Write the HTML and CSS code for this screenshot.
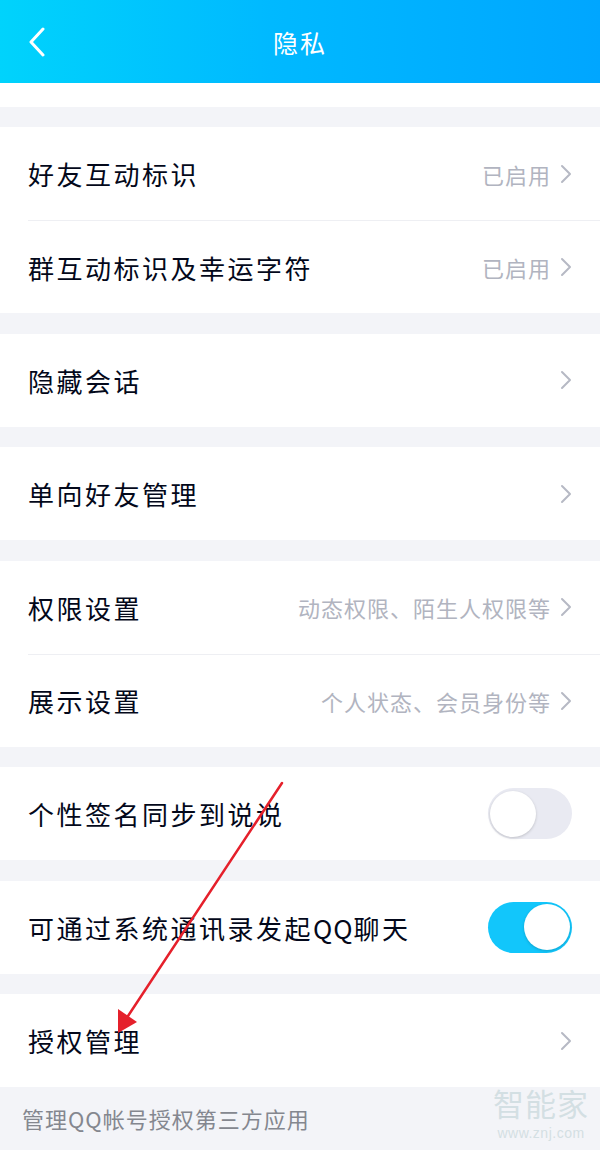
FILE: index.html
```html
<!DOCTYPE html>
<html lang="zh-CN">

<head>
    <meta charset="UTF-8">
    <meta name="viewport" content="width=device-width, initial-scale=1.0">
    <title>隐私</title>
    <link rel="stylesheet" href="styles.css">
</head>

<body>
    <div class="page">
        <header class="titlebar">
            <svg class="back" width="18" height="30" viewBox="0 0 18 30">
                <path d="M15 2 L3 15 L15 28" fill="none" stroke="#fff" stroke-width="3" stroke-linecap="round" stroke-linejoin="round" />
            </svg>
            <h1>隐私</h1>
        </header>

        <div class="spacer"></div>

        <div class="groups">
            <div class="group">
                <div class="row">
                    <span class="label">好友互动标识</span>
                    <span class="value">已启用</span>
                    <svg class="chevron" viewBox="0 0 12 20"><path d="M2 2 L10 10 L2 18" /></svg>
                </div>
                <div class="row">
                    <span class="label">群互动标识及幸运字符</span>
                    <span class="value">已启用</span>
                    <svg class="chevron" viewBox="0 0 12 20"><path d="M2 2 L10 10 L2 18" /></svg>
                </div>
            </div>

            <div class="group">
                <div class="row">
                    <span class="label">隐藏会话</span>
                    <svg class="chevron" viewBox="0 0 12 20"><path d="M2 2 L10 10 L2 18" /></svg>
                </div>
            </div>

            <div class="group">
                <div class="row">
                    <span class="label">单向好友管理</span>
                    <svg class="chevron" viewBox="0 0 12 20"><path d="M2 2 L10 10 L2 18" /></svg>
                </div>
            </div>

            <div class="group">
                <div class="row">
                    <span class="label">权限设置</span>
                    <span class="value">动态权限、陌生人权限等</span>
                    <svg class="chevron" viewBox="0 0 12 20"><path d="M2 2 L10 10 L2 18" /></svg>
                </div>
                <div class="row">
                    <span class="label">展示设置</span>
                    <span class="value">个人状态、会员身份等</span>
                    <svg class="chevron" viewBox="0 0 12 20"><path d="M2 2 L10 10 L2 18" /></svg>
                </div>
            </div>

            <div class="group">
                <div class="row">
                    <span class="label">个性签名同步到说说</span>
                    <span class="switch"><span class="knob"></span></span>
                </div>
            </div>

            <div class="group">
                <div class="row">
                    <span class="label">可通过系统通讯录发起<span class="latin">QQ</span>聊天</span>
                    <span class="switch on"><span class="knob"></span></span>
                </div>
            </div>

            <div class="group">
                <div class="row">
                    <span class="label">授权管理</span>
                    <svg class="chevron" viewBox="0 0 12 20"><path d="M2 2 L10 10 L2 18" /></svg>
                </div>
            </div>
        </div>

        <p class="hint">管理QQ帐号授权第三方应用</p>

        <div class="watermark">
            <span class="wm-name">智能家</span>
            <span class="wm-url">www.znj.com</span>
        </div>

        <svg class="arrow" width="600" height="1150" viewBox="0 0 600 1150">
            <line x1="282" y1="783" x2="128" y2="1016" stroke="#e5202b" stroke-width="2.5" stroke-linecap="round" />
            <polygon points="118,1033 118,1009 137,1022" fill="#e5202b" />
        </svg>
    </div>
</body>

</html>
```

FILE: styles.css
```css
body {
    margin: 0;
    background: #f3f4f8;
    font-family: "Noto Sans CJK SC", "Noto Sans", sans-serif;
    color: #03081a;
}

.page {
    position: relative;
    width: 600px;
    height: 1150px;
    overflow: hidden;
}

.titlebar {
    height: 83px;
    display: flex;
    align-items: center;
    justify-content: center;
    position: relative;
    background: linear-gradient(90deg, #00d3fc 0%, #00b9ff 45%, #00a6ff 100%);
}

.titlebar h1 {
    margin: 0;
    font-size: 25px;
    font-weight: normal;
    letter-spacing: 2px;
    color: #fff;
}

.back {
    position: absolute;
    left: 28px;
    top: 27px;
}

.spacer {
    height: 24px;
    background: #fff;
}

.groups {
    display: flex;
    flex-direction: column;
    gap: 20.5px;
    padding-top: 20px;
}

.group {
    background: #fff;
    padding-left: 28px;
}

.row {
    height: 93px;
    display: flex;
    align-items: center;
    padding-right: 28px;
    box-sizing: border-box;
}

.row + .row {
    border-top: 1px solid #eeeff3;
}

.label {
    flex: 1;
    font-size: 26px;
    letter-spacing: 2.5px;
}

.latin {
    letter-spacing: 1px;
}

.value {
    font-size: 22px;
    letter-spacing: 1px;
    color: #b1b4c0;
    margin-right: 9px;
}

.chevron {
    width: 12px;
    height: 20px;
    fill: none;
    stroke: #b6b9c4;
    stroke-width: 2;
    stroke-linecap: round;
    stroke-linejoin: round;
}

.switch {
    width: 84px;
    height: 51px;
    border-radius: 26px;
    background: #e9eaf2;
    display: flex;
    align-items: center;
    padding: 0 2px;
    box-sizing: border-box;
}

.switch.on {
    background: #12c6fb;
    justify-content: flex-end;
}

.knob {
    width: 46px;
    height: 46px;
    border-radius: 50%;
    background: #fff;
    box-shadow: 0 1px 3px rgba(0, 0, 0, 0.18);
}

.hint {
    width: fit-content;
    margin: 0;
    padding: 15px 0 0 22px;
    font-size: 22px;
    letter-spacing: 1px;
    color: #84878f;
}

.watermark {
    position: absolute;
    right: 11px;
    bottom: 9px;
    display: flex;
    flex-direction: column;
    align-items: center;
    color: #d3dfe3;
}

.wm-name {
    font-size: 31px;
    letter-spacing: 1px;
}

.wm-url {
    font-family: "Liberation Sans", sans-serif;
    font-size: 14px;
    letter-spacing: 0.5px;
}

.arrow {
    position: absolute;
    left: 0;
    top: 0;
    pointer-events: none;
}
```
